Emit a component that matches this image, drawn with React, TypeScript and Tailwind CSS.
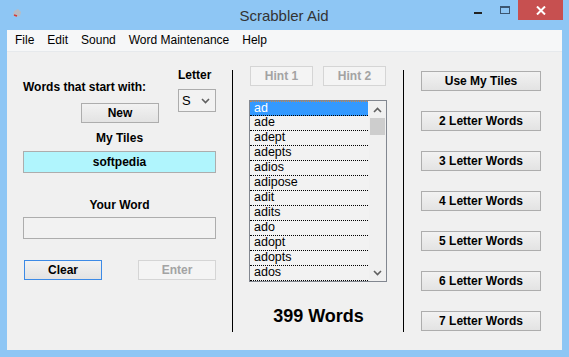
import React from "react";

const FONT = { fontFamily: '"Liberation Sans", Arial, sans-serif' };

const WORDS = ["ad", "ade", "adept", "adepts", "adios", "adipose", "adit", "adits", "ado", "adopt", "adopts", "ados"];
const LENGTHS = ["Use My Tiles", "2 Letter Words", "3 Letter Words", "4 Letter Words", "5 Letter Words", "6 Letter Words", "7 Letter Words"];

// win8 style push button
function Btn({ label, w, disabled, focused }: { label: string; w: string; disabled?: boolean; focused?: boolean }) {
  const base = "h-[20px] flex items-center justify-center text-[12px] font-bold leading-none";
  if (disabled) {
    return <div className={`${base} ${w} border border-[#d5d5d5] bg-[#f4f4f4] text-[#a3a3a3]`}>{label}</div>;
  }
  return (
    <div
      className={`${base} ${w} border ${focused ? "border-[#3c8ae6]" : "border-[#adadad]"} bg-gradient-to-b from-[#f2f2f2] to-[#e3e3e3] text-black`}
    >
      {label}
    </div>
  );
}

function Chevron({ up }: { up?: boolean }) {
  return (
    <svg width="9" height="6" viewBox="0 0 9 6">
      <path d={up ? "M1 5 L4.5 1.5 L8 5" : "M1 1 L4.5 4.5 L8 1"} fill="none" stroke="#606060" strokeWidth="1.6" />
    </svg>
  );
}

export default function App() {
  return (
    <div className="w-[569px] h-[357px] bg-[#8ec6f4] flex flex-col overflow-hidden" style={FONT}>
      {/* title bar */}
      <div className="h-[30px] flex items-start">
        <div className="w-[30px] h-[21px] flex items-center justify-center pl-[4px] pt-[6px]">
          <svg width="12" height="12" viewBox="0 0 12 12">
            <path d="M3 3 L7 1 L10 4 L9 8 L5 9 L2 7 Z" fill="#b8bcc4" />
            <path d="M3 7 L6 8" stroke="#d23a3a" strokeWidth="1.6" />
          </svg>
        </div>
        <div className="flex-1 text-center text-[15px] text-[#333] pt-[5px] pl-[70px]">Scrabbler Aid</div>
        <div className="flex items-start">
          <div className="w-[20px] h-[20px] flex items-center justify-center">
            <div className="w-[8px] h-[2px] bg-[#222] mt-[5px]" />
          </div>
          <div className="w-[20px] h-[20px] flex items-center justify-center ml-[7px] mr-[3px]">
            <div className="w-[10px] h-[8px] border border-[#3b5570] border-t-2 -mt-[1px]" />
          </div>
          <div className="w-[45px] h-[20px] bg-[#c75050] flex items-center justify-center">
            <svg width="10" height="9" viewBox="0 0 10 9">
              <path d="M1 0.5 L9 8.5 M9 0.5 L1 8.5" stroke="white" strokeWidth="2" />
            </svg>
          </div>
          <div className="w-[6px]" />
        </div>
      </div>

      {/* client area */}
      <div className="mx-[7px] h-[320px] flex flex-col bg-[#f0f0f0]">
        {/* menu */}
        <div className="h-[22px] bg-[#f6f7f8] border-b border-[#e6e9ec] flex items-center gap-[13px] pl-[8px] text-[12px] text-black pb-[2px]">
          <span>File</span>
          <span>Edit</span>
          <span>Sound</span>
          <span>Word Maintenance</span>
          <span>Help</span>
        </div>

        <div className="flex pt-[14px]">
          {/* left column */}
          <div className="w-[225px] pl-[16px] flex flex-col">
            <div className="flex">
              <div className="w-[155px] flex flex-col">
                <div className="mt-[14px] h-[14px] leading-[14px] text-[12px] font-bold">Words that start with:</div>
                <div className="mt-[9px] ml-[58px]">
                  <Btn label="New" w="w-[78px]" />
                </div>
              </div>
              <div className="flex flex-col">
                <div className="mt-[2px] h-[14px] leading-[14px] text-[12px] font-bold">Letter</div>
                <div className="mt-[7px] w-[38px] h-[23px] border border-[#acacac] bg-[#f2f2f2] flex items-center justify-between pl-[3px] pr-[5px]">
                  <span className="text-[13px]">S</span>
                  <Chevron />
                </div>
              </div>
            </div>
            <div className="mt-[8px] w-[193px] h-[14px] leading-[14px] text-center text-[12px] font-bold">My Tiles</div>
            <div className="mt-[6px] w-[193px] h-[22px] border border-[#adadad] bg-[#b0f5fd] flex items-center justify-center text-[12px] font-bold">
              softpedia
            </div>
            <div className="mt-[25px] w-[193px] h-[14px] leading-[14px] text-center text-[12px] font-bold">Your Word</div>
            <div className="mt-[5px] w-[193px] h-[22px] border border-[#adadad] bg-[#f2f2f2]" />
            <div className="mt-[21px] flex justify-between w-[193px] pl-[1px]">
              <Btn label="Clear" w="w-[78px]" focused />
              <Btn label="Enter" w="w-[78px]" disabled />
            </div>
          </div>

          <div className="w-px h-[262px] mt-[4px] bg-black" />

          {/* middle column */}
          <div className="w-[170px] flex flex-col">
            <div className="flex gap-[10px] pl-[17px]">
              <Btn label="Hint 1" w="w-[63px]" disabled />
              <Btn label="Hint 2" w="w-[63px]" disabled />
            </div>
            <div className="mt-[14px] ml-[16px] w-[138px] h-[182px] border border-[#828790] bg-[#f2f2f2] flex">
              <div className="w-[120px] flex flex-col">
                {WORDS.map((w, i) => (
                  <div
                    key={w}
                    className={`h-[15px] leading-[13px] text-[12.5px] pl-[4px] border-b border-dotted border-black ${
                      i === 0 ? "bg-[#3399ff] text-white border-t border-t-[#c8864a]" : "text-black"
                    }`}
                  >
                    {w}
                  </div>
                ))}
              </div>
              <div className="w-[17px] ml-px flex flex-col items-center bg-[#f0f0f0]">
                <div className="h-[17px] flex items-center justify-center">
                  <Chevron up />
                </div>
                <div className="w-[15px] h-[17px] bg-[#cdcdcd]" />
                <div className="flex-1" />
                <div className="h-[17px] flex items-center justify-center">
                  <Chevron />
                </div>
              </div>
            </div>
            <div className="mt-[23px] text-center text-[18px] leading-[22px] font-bold pl-[1px]">399 Words</div>
          </div>

          <div className="w-px h-[262px] mt-[4px] bg-black" />

          {/* right column */}
          <div className="flex-1 flex flex-col gap-[20px] pt-[5px] pl-[17px]">
            {LENGTHS.map((l) => (
              <Btn key={l} label={l} w="w-[120px]" />
            ))}
          </div>
        </div>
      </div>
    </div>
  );
}
